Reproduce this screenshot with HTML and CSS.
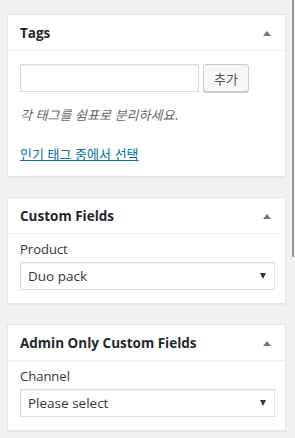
FILE: index.html
```html
<!DOCTYPE html>
<html lang="ko">
<head>
    <meta charset="UTF-8">
    <meta name="viewport" content="width=device-width, initial-scale=1.0">
    <title>Tags</title>
    <link rel="stylesheet" href="styles.css">
</head>
<body>
    <div class="sidebar">
        <div class="postbox">
            <div class="postbox-header">
                <h2>Tags</h2>
                <span class="toggle-arrow"></span>
            </div>
            <div class="inside">
                <div class="tag-add">
                    <input type="text" class="new-tag">
                    <button type="button" class="button">추가</button>
                </div>
                <p class="howto">각 태그를 쉼표로 분리하세요.</p>
                <p class="tag-cloud"><a href="#" class="tag-cloud-link">인기 태그 중에서 선택</a></p>
            </div>
        </div>

        <div class="postbox">
            <div class="postbox-header">
                <h2>Custom Fields</h2>
                <span class="toggle-arrow"></span>
            </div>
            <div class="inside fields">
                <label class="field-label">Product</label>
                <div class="select-wrap">
                    <select>
                        <option>Duo pack</option>
                    </select>
                </div>
            </div>
        </div>

        <div class="postbox">
            <div class="postbox-header">
                <h2>Admin Only Custom Fields</h2>
                <span class="toggle-arrow"></span>
            </div>
            <div class="inside fields">
                <label class="field-label">Channel</label>
                <div class="select-wrap">
                    <select>
                        <option>Please select</option>
                    </select>
                </div>
            </div>
        </div>
    </div>
    <div class="scroll-thumb"></div>
</body>
</html>
```

FILE: styles.css
```css
body {
    font-family: "Open Sans", "Noto Sans CJK KR", sans-serif;
    font-size: 13px;
    color: #32373c;
    background-color: #f1f1f1;
    margin: 0;
    padding: 0;
}
.sidebar {
    width: 279px;
    padding: 14px 0 0 7px;
}
.postbox {
    background-color: #fff;
    border: 1px solid #e5e5e5;
    box-shadow: 0 1px 1px rgba(0, 0, 0, 0.04);
    margin-bottom: 20px;
}
.postbox-header {
    display: flex;
    align-items: center;
    justify-content: space-between;
    height: 35px;
    padding: 0 14px 0 12px;
    border-bottom: 1px solid #eee;
}
.postbox-header h2 {
    margin: 0;
    font-size: 13.5px;
    font-weight: bold;
    color: #23282d;
}
.toggle-arrow {
    width: 0;
    height: 0;
    border-left: 4px solid transparent;
    border-right: 4px solid transparent;
    border-bottom: 5px solid #72777c;
    margin-top: 1px;
}
.inside {
    padding: 0 11px 12px 12px;
}
.inside.fields {
    padding-bottom: 13px;
}
.tag-add {
    display: flex;
    gap: 4px;
    padding-top: 13px;
}
.new-tag {
    width: 179px;
    height: 28px;
    box-sizing: border-box;
    border: 1px solid #ddd;
    box-shadow: inset 0 1px 2px rgba(0, 0, 0, 0.07);
    margin: 0;
}
.button {
    height: 28px;
    width: 46px;
    padding: 0;
    font-family: "Noto Sans CJK KR", sans-serif;
    font-size: 13px;
    color: #555;
    background-color: #f7f7f7;
    border: 1px solid #ccc;
    border-radius: 3px;
    box-shadow: 0 1px 0 #ccc;
}
.howto {
    font-family: "Noto Sans CJK KR", sans-serif;
    font-style: italic;
    color: #666;
    margin: 13px 0 0;
    line-height: 19px;
}
.tag-cloud {
    margin: 20px 0 0;
    line-height: 20px;
    font-family: "Noto Sans CJK KR", sans-serif;
}
.tag-cloud-link {
    color: #0073aa;
}
.field-label {
    display: block;
    margin-top: 8px;
    line-height: 15px;
}
.select-wrap {
    position: relative;
    margin-top: 5px;
    width: 255px;
}
.select-wrap select {
    -webkit-appearance: none;
    appearance: none;
    display: block;
    width: 100%;
    height: 28px;
    margin: 0;
    padding: 0 8px 0 7px;
    font-family: "Open Sans", sans-serif;
    font-size: 13.5px;
    color: #32373c;
    background-color: #fff;
    border: 1px solid #ddd;
    border-radius: 0;
    box-shadow: inset 0 1px 2px rgba(0, 0, 0, 0.07);
}
.select-wrap::after {
    content: "";
    position: absolute;
    right: 9px;
    top: 11px;
    border-left: 3.5px solid transparent;
    border-right: 3.5px solid transparent;
    border-top: 6px solid #32373c;
    pointer-events: none;
}
.scroll-thumb {
    position: absolute;
    top: 0;
    right: 1px;
    width: 2px;
    height: 257px;
    background-color: #999;
}
```
